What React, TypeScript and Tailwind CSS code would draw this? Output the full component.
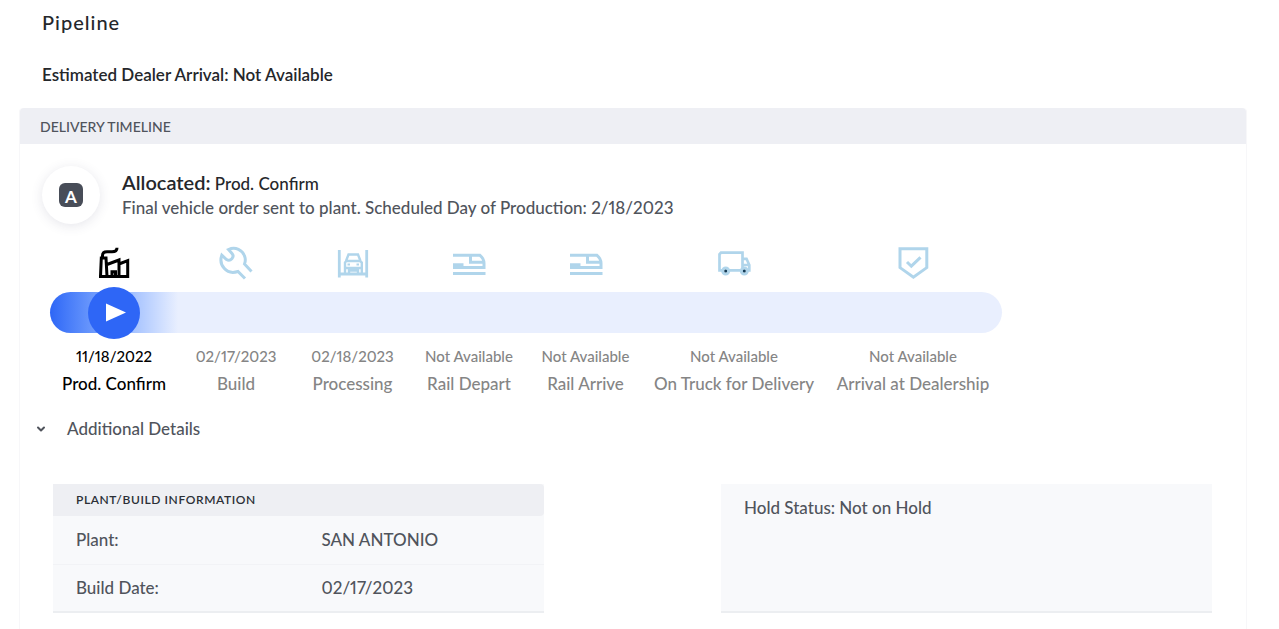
import { ReactNode, useState } from "react";
import clsx from "clsx";
import { ChevronDown } from "lucide-react";

interface Stage {
  label: string;
  date: string;
  icon: ReactNode;
}

function Icon({ children }: { children: ReactNode }) {
  return (
    <svg width="34" height="34" viewBox="0 0 34 34" fill="none" stroke="currentColor" strokeWidth="3" aria-hidden="true">
      {children}
    </svg>
  );
}

function FactoryIcon() {
  return (
    <Icon>
      <path d="M5.5 12V9.5C5.5 6.5 8 5.8 10 5.8h5c3.5 0 5-1 5-4" />
      <path d="M3.5 30.500 4.3 12H9L10 30.500M10 18.5l12-4.500v16.500M22 18l8.700-3.300V30.500H2" />
      <path d="M15 30v-4.300h3.500V30" />
    </Icon>
  );
}

function WrenchIcon() {
  return (
    <Icon>
      <path d="M32.5 25.5 25.5 18c1-2.500 1-4.500.5-6.500C24 3.500 16 .5 9.500 3.500L13 7.500c3 3.500-1.500 8.500-5.500 6L2.800 9.200C-.5 18.500 7 29.500 19 25.500l7 7" />
    </Icon>
  );
}

function LiftIcon() {
  return (
    <Icon>
      <path d="M3.3 4v27.500M30.700 4v27.500M3 28h28" strokeWidth="2.800" />
      <path strokeWidth="2.400" d="M10 15 12.500 8.500h9.500l2.500 6.500M9 28V16.500L10.500 15h13.500l1.800 1.500V28M9 22h16.800M13 27.500v-3h9v3" />
      <path strokeWidth="2" d="M11.500 18.500h2.500M20.500 18.500h2.500" />
    </Icon>
  );
}

function TrainIcon() {
  return (
    <Icon>
      <path d="M1 9.300h27c2.500 2 4 5 4 8v4.300H1M18.500 10v6.200h13M1 27.600h32.500" />
      <path d="M1 19h10.500" strokeWidth="3.500" />
    </Icon>
  );
}

function TruckIcon() {
  return (
    <Icon>
      <path strokeWidth="2.700" d="M5.500 24.300H2.500V8.300L4 6.600h21.500v17.700H12M25.500 12.800h4l2.800 6.200v5.300h-2M25.500 19h6.500" />
      <circle cx="8.700" cy="25" r="3" />
      <circle cx="27.300" cy="25" r="3" />
      <circle cx="8.700" cy="25" r="1.500" fill="#123a55" stroke="none" />
      <circle cx="27.300" cy="25" r="1.500" fill="#123a55" stroke="none" />
    </Icon>
  );
}

function ShieldIcon() {
  return (
    <Icon>
      <path d="M4 2.800h26.800v18.800L17.400 31.200 4 21.600Z" />
      <path d="m11 16 4.300 4.200 9.200-8.900" />
    </Icon>
  );
}

const stages: Stage[] = [
  { label: "Prod. Confirm", date: "11/18/2022", icon: <FactoryIcon /> },
  { label: "Build", date: "02/17/2023", icon: <WrenchIcon /> },
  { label: "Processing", date: "02/18/2023", icon: <LiftIcon /> },
  { label: "Rail Depart", date: "Not Available", icon: <TrainIcon /> },
  { label: "Rail Arrive", date: "Not Available", icon: <TrainIcon /> },
  { label: "On Truck for Delivery", date: "Not Available", icon: <TruckIcon /> },
  { label: "Arrival at Dealership", date: "Not Available", icon: <ShieldIcon /> },
];

const activeStage = 0;

function Timeline() {
  return (
    <ol className="mx-[30px] mt-[22px] grid max-w-[952px] grid-cols-[128fr_116fr_117fr_116fr_117fr_180fr_178fr]">
      {stages.map((stage, i) => {
        const active = i === activeStage;
        return (
          <li
            key={stage.label}
            className={clsx("flex flex-col items-center whitespace-nowrap", active ? "text-black" : "text-[#858585]")}
          >
            <div className={active ? "text-black" : "text-[#b0d5eb]"}>{stage.icon}</div>
            <div
              className={clsx(
                "mt-3 flex h-[41px] w-full items-center justify-center",
                i === 0 && "rounded-l-full",
                i === stages.length - 1 && "rounded-r-full",
                active ? "bg-linear-to-r from-[#2e66f6] to-[#e9effe]" : "bg-[#e9effe]"
              )}
            >
              {active && (
                <div className="flex size-[52px] shrink-0 items-center justify-center rounded-full bg-[#2e66f6]">
                  <svg width="24" height="20" viewBox="0 0 24 20" aria-hidden="true">
                    <path d="M4 0.500v18l20-9Z" fill="#fff" />
                  </svg>
                </div>
              )}
            </div>
            <span className="mt-[13px] text-[15px] leading-5 font-medium">{stage.date}</span>
            <span className="mt-1.5 text-[17px] leading-6 font-medium">{stage.label}</span>
          </li>
        );
      })}
    </ol>
  );
}

function Details() {
  return (
    <div className="mt-[43px] mr-[34px] ml-[33px] grid grid-cols-2 gap-[177px] text-[17px] leading-6 font-medium text-[#50545c]">
      <table className="w-full table-fixed border-b-2 border-[#eceef1] bg-[#f8f9fb] text-left">
        <thead>
          <tr>
            <th
              colSpan={2}
              className="h-8 rounded-r bg-[#eeeff3] px-[23px] text-xs font-semibold tracking-wider text-[#2b2f36]"
            >
              PLANT/BUILD INFORMATION
            </th>
          </tr>
        </thead>
        <tbody>
          <tr className="border-b border-[#f2f3f6]">
            <th className="h-12 px-[23px] font-medium">Plant:</th>
            <td className="px-[23px]">SAN ANTONIO</td>
          </tr>
          <tr>
            <th className="h-12 px-[23px] font-medium">Build Date:</th>
            <td className="px-[23px]">02/17/2023</td>
          </tr>
        </tbody>
      </table>
      <div className="border-b-2 border-[#eceef1] bg-[#f8f9fb] px-[23px] py-3">Hold Status: Not on Hold</div>
    </div>
  );
}

export default function App() {
  const [open, setOpen] = useState(true);

  return (
    <main className="flex min-h-screen flex-col bg-white pr-8 pl-[19px] font-['Lato',sans-serif] text-[#25272b] proportional-nums">
      <h1 className="mt-[7px] ml-[23px] text-xl leading-[30px] font-medium tracking-wider">Pipeline</h1>
      <p className="mt-[26px] ml-[23px] text-[17px] leading-6 font-semibold">Estimated Dealer Arrival: Not Available</p>

      <section className="mt-[21px] flex-1 rounded-t border-x border-[#f7f7f9]">
        <h2 className="h-9 rounded-t bg-[#eeeff4] px-5 text-sm leading-[38px] font-medium text-[#50545c]">
          DELIVERY TIMELINE
        </h2>

        <div className="mt-[22px] ml-[22px] flex items-center gap-[22px]">
          <div className="flex size-[58px] items-center justify-center rounded-full bg-white shadow-[0_2px_12px_rgba(60,65,100,0.13)]">
            <span className="flex size-6 items-center justify-center rounded-md bg-[#484d58] pt-0.5 text-[17px] leading-none font-bold text-white">
              A
            </span>
          </div>
          <div className="text-[17px] leading-6 font-medium">
            <p>
              <span className="text-xl leading-6 font-semibold">Allocated:</span> Prod. Confirm
            </p>
            <p className="text-[#50545c]">Final vehicle order sent to plant. Scheduled Day of Production: 2/18/2023</p>
          </div>
        </div>

        <Timeline />

        <button
          type="button"
          aria-expanded={open}
          onClick={() => setOpen(!open)}
          className="mt-[21px] ml-[15px] flex items-center gap-5 text-[17px] leading-6 font-medium text-[#50545c]"
        >
          <ChevronDown size={12} strokeWidth={4} className={clsx(!open && "-rotate-90")} />
          Additional Details
        </button>

        {open && <Details />}
      </section>
    </main>
  );
}
